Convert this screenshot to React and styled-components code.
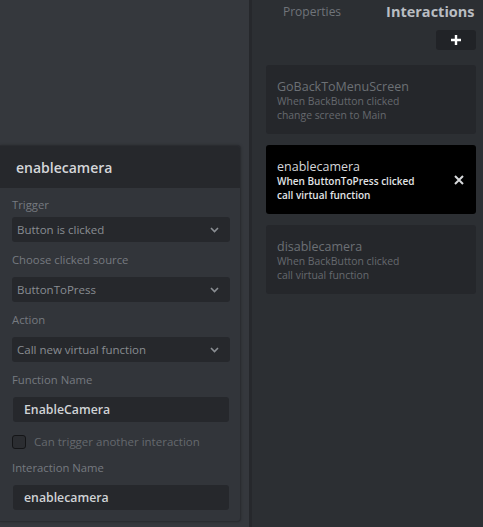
import styled, { createGlobalStyle } from 'styled-components'

const GlobalStyle = createGlobalStyle`
  html, body {
    margin: 0;
    padding: 0;
    background: #35383d;
    font-family: "Open Sans", "Noto Sans", sans-serif;
  }
  * { box-sizing: border-box; }
`

const Screen = styled.div`
  display: flex;
  width: 483px;
  height: 527px;
  overflow: hidden;
`

const Canvas = styled.div`
  width: 249px;
  flex-shrink: 0;
  background: #35383d;
  padding-top: 145px;
`

const Divider = styled.div`
  width: 3px;
  flex-shrink: 0;
  background: #26282c;
`

const SidePanel = styled.div`
  flex: 1;
  background: #2c2f33;
  display: flex;
  flex-direction: column;
  padding: 0 7px 0 14px;
`

const Tabs = styled.div`
  display: flex;
  align-items: flex-end;
  height: 22px;
`

const Tab = styled.div`
  font-size: ${(p) => (p.$active ? '14.5px' : '12px')};
  font-weight: ${(p) => (p.$active ? 700 : 400)};
  color: ${(p) => (p.$active ? '#b9bdc2' : '#70747a')};
  margin-left: ${(p) => (p.$active ? '45px' : '17px')};
  line-height: 20px;
`

const Toolbar = styled.div`
  display: flex;
  justify-content: flex-end;
  margin-top: 8px;
`

const AddButton = styled.div`
  width: 40px;
  height: 20px;
  border-radius: 3px;
  background: #212327;
  display: flex;
  align-items: center;
  justify-content: center;
`

const CardList = styled.div`
  display: flex;
  flex-direction: column;
  gap: 11px;
  margin-top: 15px;
`

const Card = styled.div`
  position: relative;
  width: 210px;
  height: 69px;
  border-radius: 3px;
  background: ${(p) => (p.$active ? '#000000' : '#25272b')};
  padding: 13px 11px 10px;
`

const CardTitle = styled.div`
  font-size: 12.5px;
  line-height: 15px;
  margin-top: 1px;
  color: ${(p) => (p.$active ? '#d4d6d9' : '#6c7075')};
`

const CardText = styled.div`
  font-size: ${(p) => (p.$active ? '10px' : '10.4px')};
  line-height: 14px;
  font-weight: ${(p) => (p.$active ? 600 : 400)};
  color: ${(p) => (p.$active ? '#e2e4e6' : '#65696e')};
`

const CloseIcon = styled.svg`
  position: absolute;
  right: 12px;
  top: 30px;
`

const Popup = styled.div`
  width: 241px;
  border: 1px solid #2a2c30;
  border-left: none;
  border-radius: 0 4px 4px 0;
  background: #32353a;
  box-shadow: 0 0 3px rgba(0, 0, 0, 0.25);
  overflow: hidden;
`

const PopupHeader = styled.div`
  height: 42px;
  background: #26282c;
  display: flex;
  align-items: center;
  padding-left: 16px;
  font-size: 14px;
  font-weight: 600;
  color: #d4d6d9;
`

const PopupBody = styled.div`
  display: flex;
  flex-direction: column;
  padding: 9px 10px 11px 12px;
`

const Label = styled.div`
  font-size: 11.3px;
  line-height: 15px;
  color: #767a80;
  margin-bottom: ${(p) => p.$gap || '10px'};
`

const Select = styled.div`
  height: 25px;
  border-radius: 3px;
  background: #26282c;
  display: flex;
  align-items: center;
  justify-content: space-between;
  padding: 0 11px 0 5px;
  font-size: 11.5px;
  color: #898d92;
  margin-bottom: 10px;
`

const TextInput = styled.div`
  height: 25px;
  border-radius: 3px;
  background: #26282c;
  display: flex;
  align-items: center;
  padding: 0 11px;
  margin: 0 1px;
  font-size: 12.3px;
  color: #d0d3d6;
  font-weight: 600;
`

const CheckRow = styled.div`
  display: flex;
  align-items: center;
  gap: 8px;
  margin: 12px 0 11px 0;
  font-size: 11.5px;
  color: #65696e;
`

const CheckBox = styled.div`
  width: 14px;
  height: 14px;
  border: 1px solid #141517;
  border-radius: 3px;
  background: #2b2d31;
`

const Chevron = () => (
  <svg width="9" height="6" viewBox="0 0 9 6">
    <path d="M1 1l3.5 3.5L8 1" fill="none" stroke="#8a8e93" strokeWidth="1.6" />
  </svg>
)

const cards = [
  { title: 'GoBackToMenuScreen', lines: ['When BackButton clicked', 'change screen to Main'] },
  { title: 'enablecamera', lines: ['When ButtonToPress clicked', 'call virtual function'], active: true },
  { title: 'disablecamera', lines: ['When BackButton clicked', 'call virtual function'] },
]

export default function App() {
  return (
    <Screen>
      <GlobalStyle />
      <Canvas>
        <Popup>
          <PopupHeader>enablecamera</PopupHeader>
          <PopupBody>
            <Label $gap="5px">Trigger</Label>
            <Select>
              Button is clicked
              <Chevron />
            </Select>
            <Label>Choose clicked source</Label>
            <Select>
              ButtonToPress
              <Chevron />
            </Select>
            <Label>Action</Label>
            <Select>
              Call new virtual function
              <Chevron />
            </Select>
            <Label>Function Name</Label>
            <TextInput>EnableCamera</TextInput>
            <CheckRow>
              <CheckBox />
              Can trigger another interaction
            </CheckRow>
            <Label>Interaction Name</Label>
            <TextInput>enablecamera</TextInput>
          </PopupBody>
        </Popup>
      </Canvas>
      <Divider />
      <SidePanel>
        <Tabs>
          <Tab>Properties</Tab>
          <Tab $active>Interactions</Tab>
        </Tabs>
        <Toolbar>
          <AddButton>
            <svg width="10" height="10" viewBox="0 0 10 10">
              <path d="M5 0v10M0 5h10" stroke="#ffffff" strokeWidth="2.4" />
            </svg>
          </AddButton>
        </Toolbar>
        <CardList>
          {cards.map((c) => (
            <Card key={c.title} $active={c.active}>
              <CardTitle $active={c.active}>{c.title}</CardTitle>
              {c.lines.map((l) => (
                <CardText key={l} $active={c.active}>{l}</CardText>
              ))}
              {c.active && (
                <CloseIcon width="10" height="10" viewBox="0 0 10 10">
                  <path d="M1 1l8 8M9 1l-8 8" stroke="#d8dadc" strokeWidth="2" />
                </CloseIcon>
              )}
            </Card>
          ))}
        </CardList>
      </SidePanel>
    </Screen>
  )
}
